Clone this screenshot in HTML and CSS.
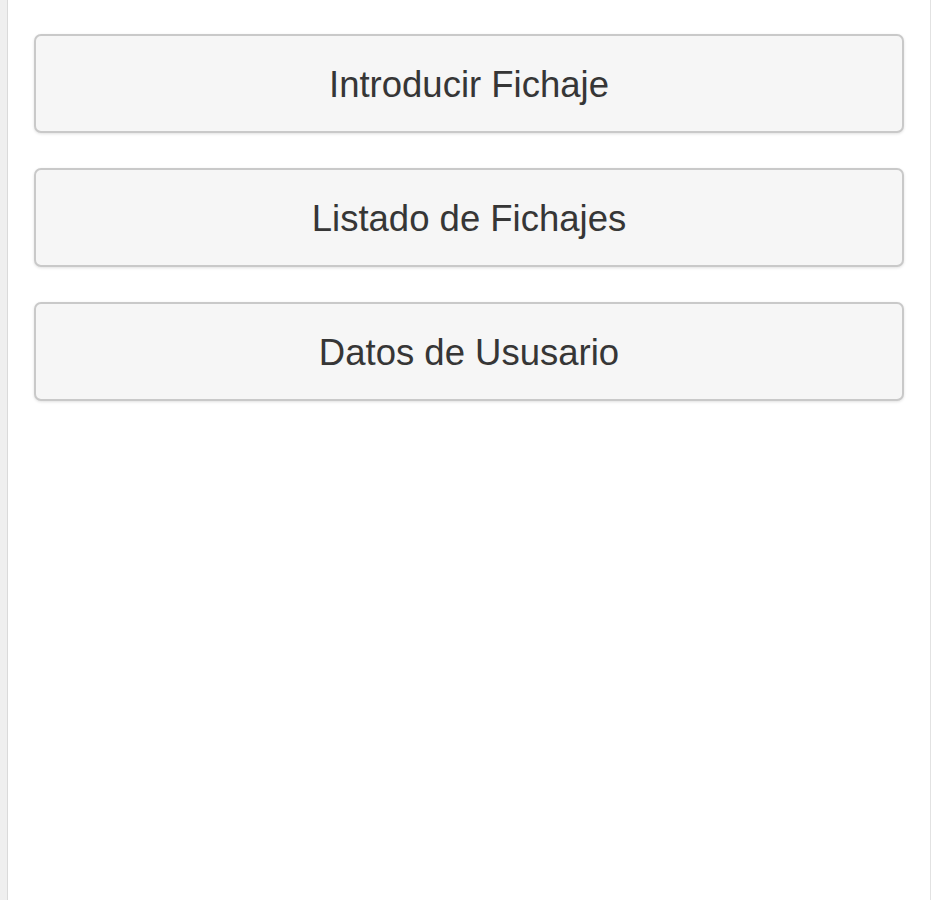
FILE: index.html
```html
<!DOCTYPE html>
<html lang="es">
<head>
<meta charset="utf-8">
<title>Fichajes</title>
<link rel="stylesheet" href="styles.css">
</head>
<body>
<div class="shell">
  <div class="gutter"></div>
  <div class="page">
    <a class="btn" href="#">Introducir Fichaje</a>
    <a class="btn" href="#">Listado de Fichajes</a>
    <a class="btn" href="#">Datos de Ususario</a>
  </div>
</div>
</body>
</html>
```

FILE: styles.css
```css
html, body {
  margin: 0;
  padding: 0;
  background: #ffffff;
}

.shell {
  display: flex;
  min-height: 900px;
  margin-right: 2px;
}

.gutter {
  width: 7px;
  background: #efefef;
}

.page {
  flex: 1;
  background: #ffffff;
  border-left: 1px solid #dadada;
  border-right: 1px solid #e2e2e2;
  padding: 34px 26px 0 26px;
  display: flex;
  flex-direction: column;
  gap: 35px;
}

.btn {
  display: flex;
  align-items: center;
  justify-content: center;
  box-sizing: border-box;
  height: 99px;
  padding-top: 3px;
  background: #f6f6f6;
  border: 2px solid #c9c9c9;
  border-radius: 7px;
  box-shadow: 0 1px 3px rgba(0, 0, 0, 0.12);
  font-family: "Liberation Sans", Arial, sans-serif;
  font-size: 36.5px;
  color: #363636;
  text-decoration: none;
  text-shadow: 0 1px 0 #f3f3f3;
}
```
